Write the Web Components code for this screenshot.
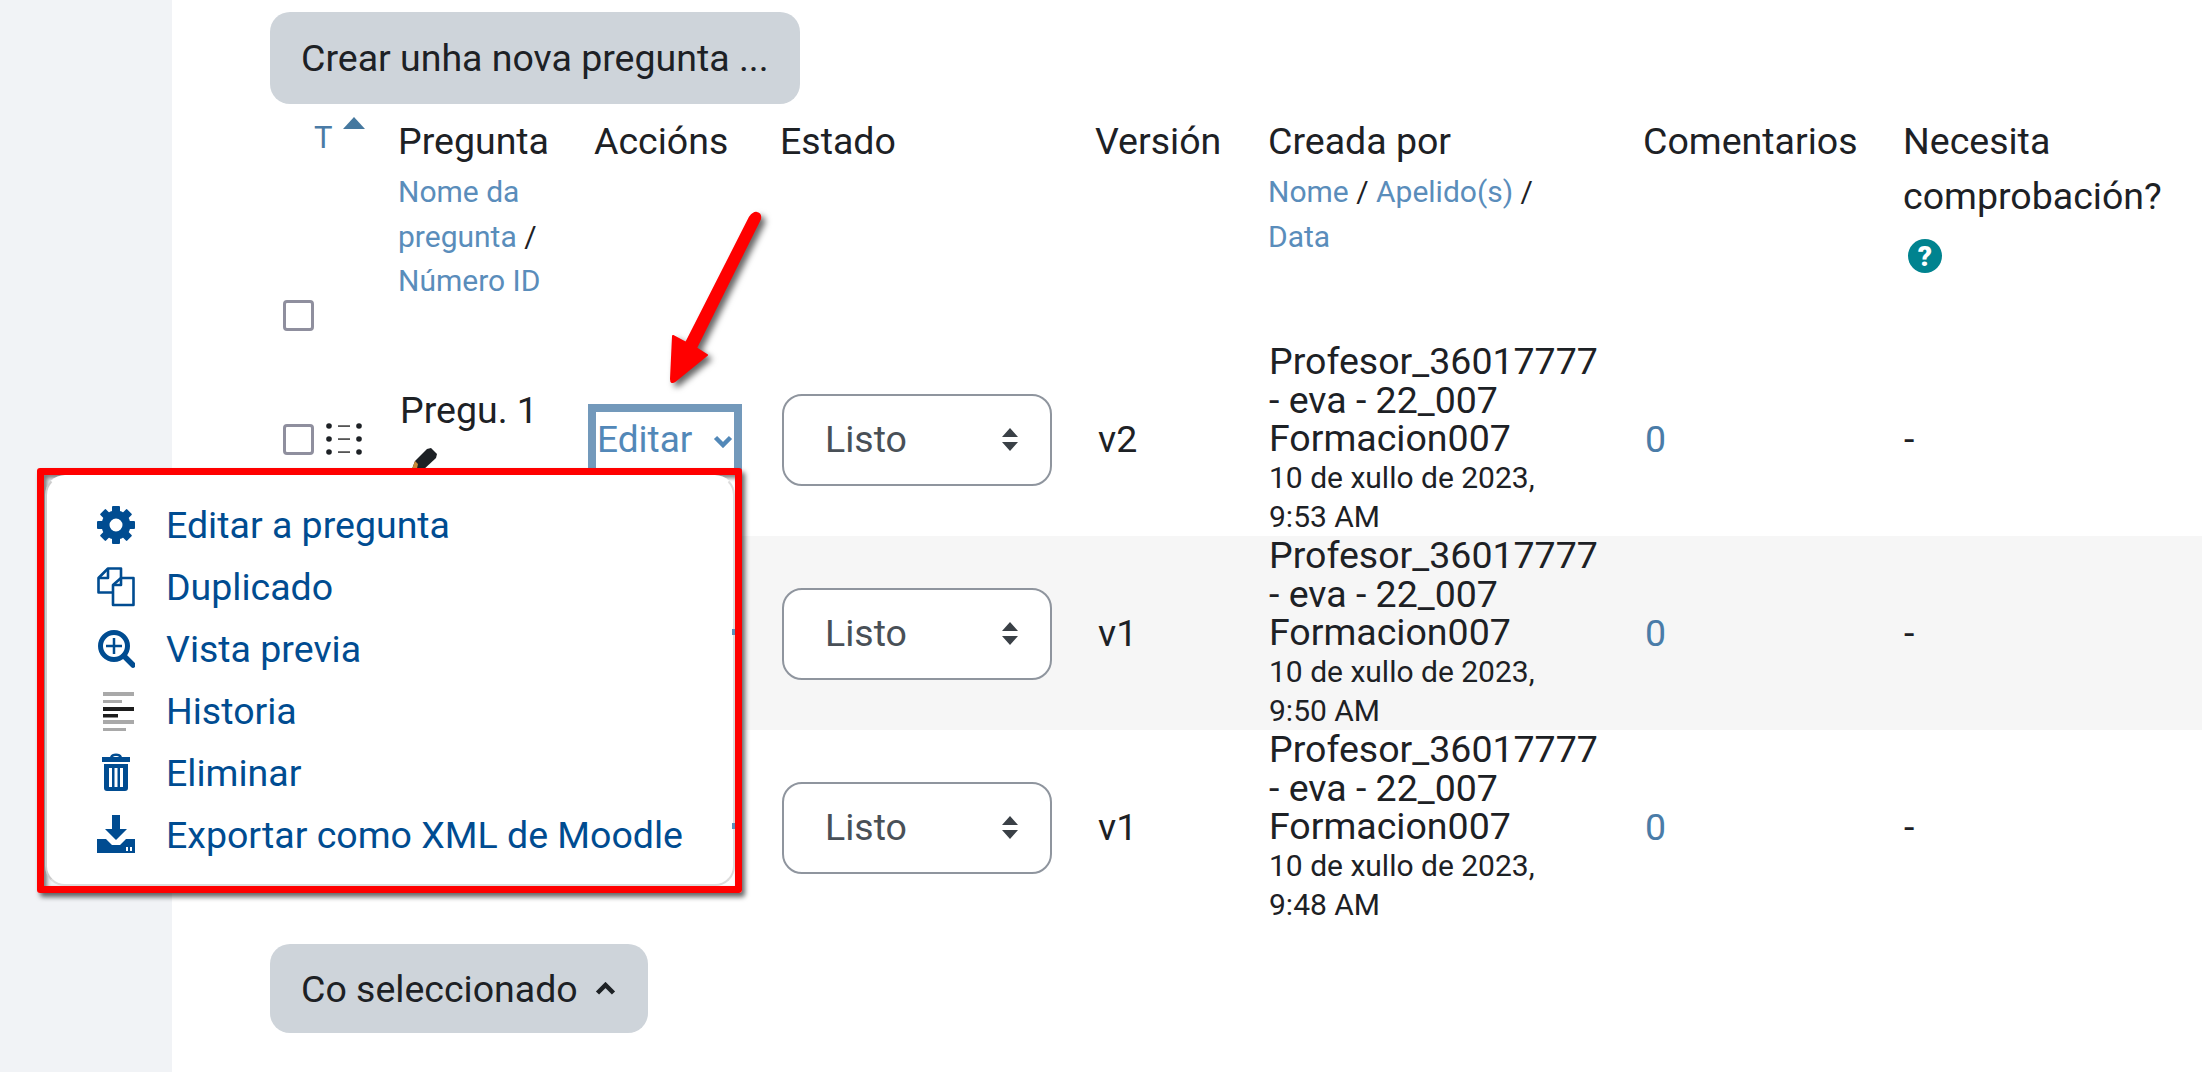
<!doctype html>
<html><head><meta charset="utf-8">
<style>
html,body{margin:0;padding:0;background:#fff}
body{width:2202px;height:1072px;overflow:hidden;position:relative;font-family:Roboto,"Liberation Sans",sans-serif;color:#1d2125;font-size:37.5px}
</style></head><body>
<q-page>
  <q-btn style="width:530px">Crear unha nova pregunta ...</q-btn>
  <q-head></q-head>
  <q-row num="1" state="v2" name="Pregu. 1" editar date="10 de xullo de 2023," time="9:53 AM"></q-row>
  <q-row num="2" state="v1" striped date="10 de xullo de 2023," time="9:50 AM"></q-row>
  <q-row num="3" state="v1" date="10 de xullo de 2023," time="9:48 AM"></q-row>
  <q-btn class="low" style="width:378px;height:89px;margin-top:20px" caret>Co seleccionado</q-btn>
</q-page>
<q-frame>
  <q-item icon="gear">Editar a pregunta</q-item>
  <q-item icon="dup">Duplicado</q-item>
  <q-item icon="zoom">Vista previa</q-item>
  <q-item icon="hist">Historia</q-item>
  <q-item icon="trash">Eliminar</q-item>
  <q-item icon="down">Exportar como XML de Moodle</q-item>
</q-frame>
<q-arrow></q-arrow>
<script>
const def=(n,html)=>customElements.define(n,class extends HTMLElement{connectedCallback(){if(this.shadowRoot)return;const r=this.attachShadow({mode:'open'});r.innerHTML=typeof html==='function'?html(this):html;}});
const COLS='128px 190px 192px 315px 173px 375px 262px 1fr';
const CHECK='<span style="display:block;box-sizing:border-box;width:31px;height:31px;border:3px solid #8f8f9e;border-radius:4px;background:#fff"></span>';

def('q-page',`<style>:host{display:flex;flex-direction:column;box-sizing:border-box;width:2202px;height:1072px;margin:0;padding:12px 0 0 270px;background:linear-gradient(90deg,#f1f3f6 172px,#fff 172px)}</style><slot></slot>`);

def('q-btn',e=>`<style>:host{display:flex;align-items:center;box-sizing:border-box;height:92px;padding-left:31px;background:#ced4da;border-radius:20px;color:#1d2125;font-size:37.5px;flex:none}
svg{margin-left:17px}</style><slot></slot>${e.hasAttribute('caret')?'<svg width="21" height="13" viewBox="0 0 21 13"><path d="M2.500 11 10.500 3l8 8" fill="none" stroke="#1d2125" stroke-width="4.500"/></svg>':''}`);

def('q-head',`<style>
:host{display:grid;grid-template-columns:${COLS};height:238px;flex:none;box-sizing:border-box;line-height:55px;padding-top:10px;font-size:37.5px;color:#1d2125}
.sub{display:block;font-size:30px;line-height:44.5px;margin-top:1px;color:#1d2125}
a{color:#5a8dbb;text-decoration:none}
.first{display:flex;flex-direction:column;justify-content:space-between;height:217px}
.t{display:flex;margin:0 0 0 44px;color:#4a7ba6;font-size:31px;line-height:34px;padding-top:7px}
.t svg{margin:-5px 0 0 9px}
.c{margin:0 0 0 13px}
.q{display:block;margin:14px 0 0 4px}
.nd{margin-left:-2px}
</style>
<div class="first"><div class="t">T<svg width="24" height="16" viewBox="0 0 24 16"><path d="M12 1 23 13H1z" fill="#45789f"/></svg></div><div class="c">${CHECK}</div></div>
<div>Pregunta<span class="sub"><a>Nome da<br>pregunta</a> /<br><a>Número ID</a></span></div>
<div style="margin-left:6px">Accións</div>
<div>Estado</div>
<div>Versión</div>
<div>Creada por<span class="sub"><a>Nome</a> / <a>Apelido(s)</a> /<br><a>Data</a></span></div>
<div>Comentarios</div>
<div class="nd">Necesita<br>comprobación?<svg class="q" width="36" height="36" viewBox="0 0 36 36"><circle cx="18" cy="18" r="17" fill="#00838f"/><text x="18" y="28" text-anchor="middle" font-family="Roboto" font-weight="900" font-size="28" fill="#fff">?</text></svg></div>`);

def('q-select',`<style>:host{display:flex;align-items:center;box-sizing:border-box;width:270px;height:92px;margin:2px 0 0 2px;border:2px solid #8f959e;border-radius:20px;background:#fff;color:#495057;font-size:37.5px;padding:0 0 2px 41px}
svg{margin-left:auto;margin-right:30px}</style>Listo<svg width="20" height="25" viewBox="0 0 20 25"><path d="M10 1 18 10H2zM10 24 2 15h16z" fill="#3a4046"/></svg>`);

def('q-row',e=>{
 const has=e.hasAttribute('editar');
 return `<style>:host{display:grid;grid-template-columns:${COLS};height:194px;align-items:center;flex:none;background:${e.hasAttribute('striped')?'#f6f6f6':'#fff'}}
.first{display:flex;align-items:center;margin-left:13px;gap:12px}
.name{margin-left:2px;line-height:50px;margin-top:-16px}
.name svg{display:block;margin-left:8px;margin-top:12px}
.ed{box-sizing:border-box;width:154px;height:70px;border:8px solid #7399bb;border-bottom-width:0;display:flex;align-items:center;padding:0 0 8px 1px;color:#5288b8;font-size:37px;background:#fff;}
.ed svg{margin-left:21px;margin-top:4px}
.who{margin-left:1px;line-height:38.5px;font-size:37.5px}
.who small{display:block;font-size:30px;line-height:39px}
.zero{margin-left:2px;color:#4a7ca8}
.v{margin-left:3px}.d{margin-left:-1px}
</style>
<div class="first">${has?CHECK+'<svg width="36" height="32" viewBox="0 0 36 32"><g id="a"><circle cx="3" cy="3" r="2.800" fill="#1d2125"/><rect x="12" y="2.200" width="12" height="1.800" fill="#555"/><circle cx="33" cy="3" r="2.800" fill="#1d2125"/></g><use href="#a" y="13"/><use href="#a" y="26"/></svg>':''}</div>
<div class="name">${has?`${e.getAttribute('name')}<svg width="30" height="30" viewBox="0 0 30 30"><path d="M1 30 7 14 19 2l4-1 6 6-1 4-14 13z" fill="#1d2125"/><path d="M1 30 7 14l3 3-3 13z" fill="#c98a3a"/></svg>`:''}</div>
<div>${has?'<div class="ed">Editar<svg width="20" height="13" viewBox="0 0 20 13"><path d="M2.500 2.500 10 10l7.500-7.500" fill="none" stroke="#5288b8" stroke-width="4.500"/></svg></div>':''}</div>
<div><q-select></q-select></div>
<div class="v">${e.getAttribute('state')}</div>
<div class="who">Profesor_36017777<br>- eva - 22_007<br>Formacion007<small>${e.getAttribute('date')}</small><small>${e.getAttribute('time')}</small></div>
<div class="zero">0</div>
<div class="d">-</div>`});

def('q-frame',`<style>:host{display:block;position:absolute;left:37px;top:468px;width:705px;height:425px;box-sizing:border-box;border:7px solid #f00;border-radius:3px;box-shadow:3px 4px 5px rgba(0,0,0,.6),inset 3px 3px 4px rgba(0,0,0,.5)}
.m{box-sizing:border-box;height:100%;background:#fff;border:2px solid #dcdcdc;border-top-color:transparent;border-left-color:#ccc;border-radius:20px;padding:17px 0 0 0;display:flex;flex-direction:column;margin:0 0 0 1px;position:relative}
i{position:absolute;right:-2px;width:3px;height:6px;background:#5b93bd}
</style><div class="m"><slot></slot><i style="top:152px"></i><i style="top:346px"></i></div>`);

const teeth=[0,45,90,135,180,225,270,315].map(a=>`<rect x="15" y="1" width="8" height="9" rx="1" fill="#004c91" transform="rotate(${a} 19 20)"/>`).join('');
const ICONS={
gear:`${teeth}<circle cx="19" cy="20" r="10.500" fill="none" stroke="#004c91" stroke-width="8"/>`,
dup:`<g fill="#fff" stroke="#004c91" stroke-width="2.600" stroke-linejoin="round"><path d="M11 1.500h13v24H1.500V11z"/><path d="M1.500 11h9.500V1.500" fill="none"/><path d="M24 11h12.500v27H16V18z"/><path d="M16 18h8v-7" fill="none"/></g>`,
zoom:`<circle cx="17" cy="17" r="13.500" fill="none" stroke="#004c91" stroke-width="5"/><path d="M27 27 36 36" stroke="#004c91" stroke-width="5.500" stroke-linecap="round"/><path d="M17 9v16M9 17h16" stroke="#004c91" stroke-width="2.500"/>`,
hist:`<g fill="#a9a9a9"><rect x="6" y="1" width="31" height="4"/><rect x="6" y="9" width="19" height="3"/><rect x="6" y="29" width="31" height="4"/><rect x="6" y="37" width="23" height="3"/></g><rect x="6" y="16" width="31" height="4" fill="#1d1d1d"/><rect x="6" y="23" width="15" height="3.500" fill="#1d1d1d"/>`,
trash:`<path fill="#004c91" fill-rule="evenodd" d="M13 4c1-3 3-3.500 6-3.500S24 1 25 4h8v5H5V4zM16 4h6c-.5-1-1.500-1-3-1s-2.500 0-3 1zM7 11h24v24c0 2-1 3-3 3H10c-2 0-3-1-3-3zm5 4v19h3V15zm5.500 0v19h3V15zM23 15v19h3V15z"/>`,
down:`<path fill="#004c91" fill-rule="evenodd" d="M15 0h8v14h7L19 25 8 14h7zM0 24h9l6 6h8l6-6h9v14H0zm29 8v4h2v-4zm4 0v4h2v-4z"/>`};
def('q-item',e=>`<style>:host{display:flex;align-items:center;height:62px;color:#004c91;font-size:37.5px;flex:none}
svg{flex:none;margin:0 31px 0 50px;width:38px;height:40px}</style><svg viewBox="0 0 38 40">${ICONS[e.getAttribute('icon')]}</svg><slot></slot>`);

def('q-arrow',`<style>:host{display:block;position:absolute;left:650px;top:200px;width:130px;height:200px;pointer-events:none}svg{display:block;overflow:visible;filter:drop-shadow(4px 4px 3px rgba(0,0,0,.6))}</style>
<svg width="130" height="200" viewBox="0 0 130 200"><path fill="#f00" stroke="#f00" stroke-width="2" stroke-linejoin="round" d="M100 17Q104 12 107 13Q111 14 110 19L46 148 57 155 25 181Q21 184 21 179L23 136 36 143z"/></svg>`);
</script>
</body></html>
